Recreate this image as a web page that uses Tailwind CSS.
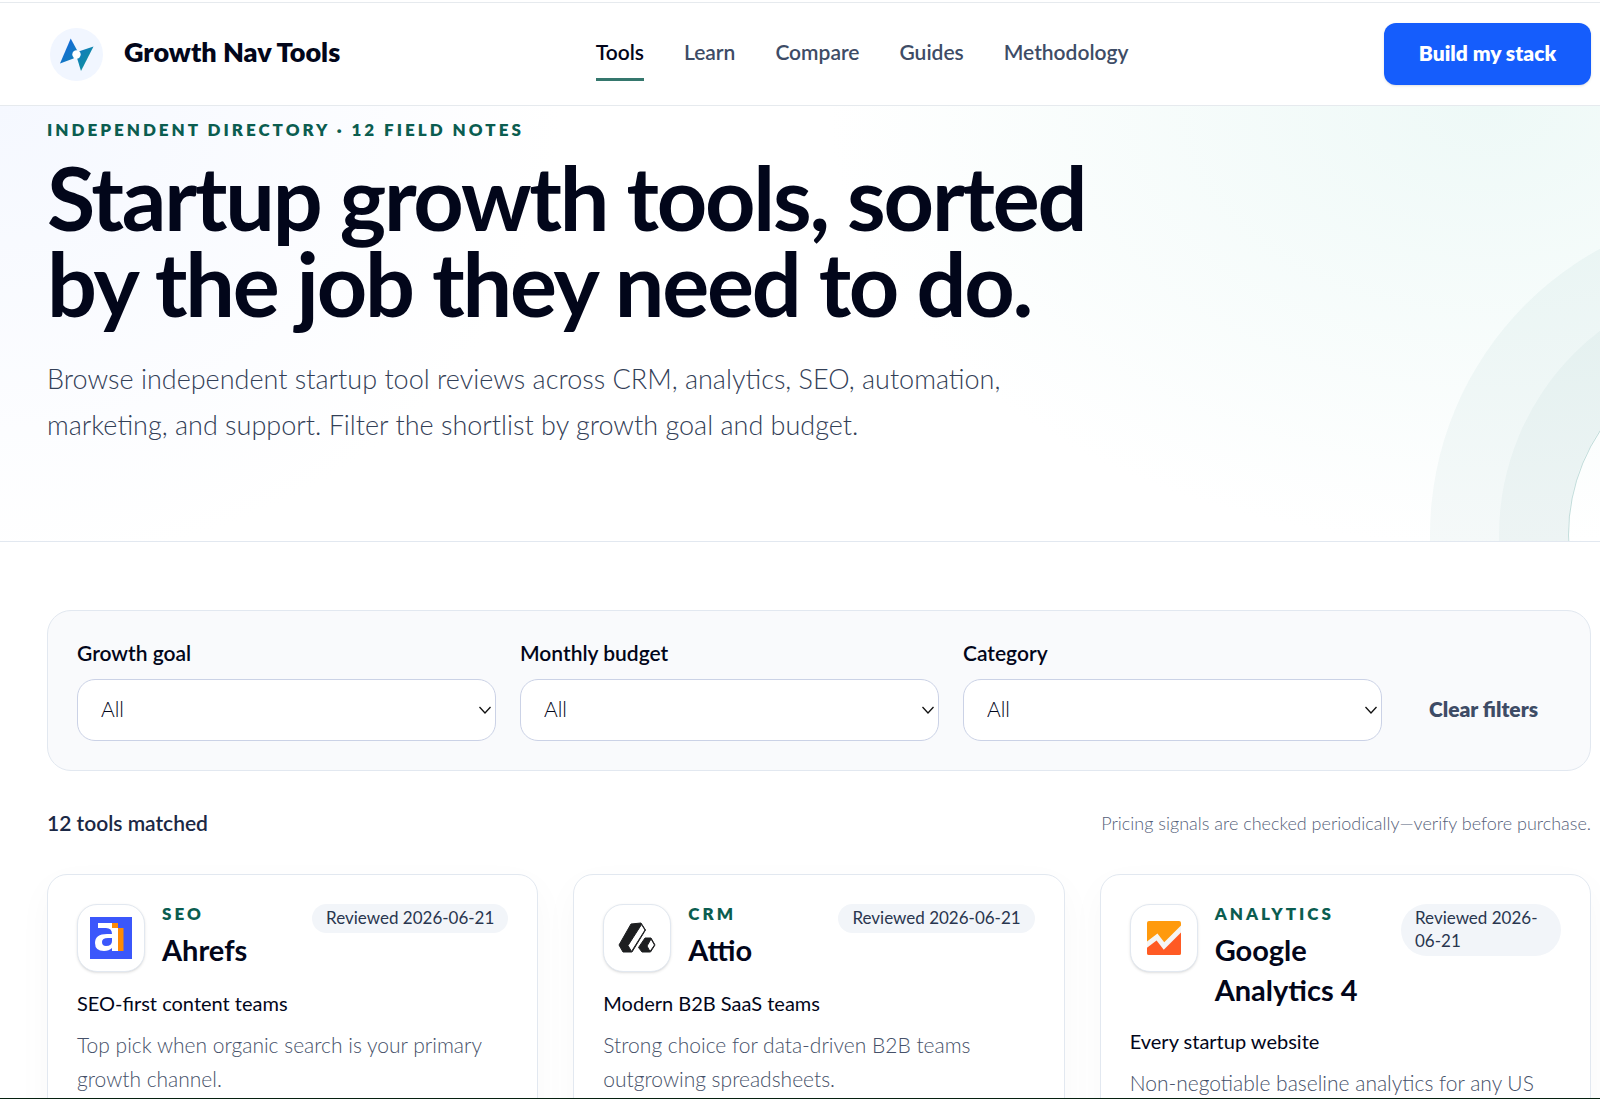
<!DOCTYPE html>
<html lang="en">
<head>
<meta charset="utf-8">
<meta name="viewport" content="width=device-width, initial-scale=1">
<title>Growth Nav Tools</title>
<script src="https://cdn.jsdelivr.net/npm/@tailwindcss/browser@4"></script>
</head>
<body class="h-screen overflow-hidden bg-white pt-[2px] font-[Lato,'Open_Sans',sans-serif] text-[#02061a]">

<header class="flex h-[104px] items-center justify-between border-y border-[#e6eaee] pr-[9px] pl-[47px]">
  <a href="#" class="flex items-center gap-[21px]">
    <svg class="ml-[3px] size-[53px]" viewBox="0 0 53 53" aria-hidden="true">
      <defs>
        <linearGradient id="needle" x1="10" y1="14" x2="42" y2="40" gradientUnits="userSpaceOnUse">
          <stop offset="0" stop-color="#1565e0"/><stop offset="1" stop-color="#0d9499"/>
        </linearGradient>
      </defs>
      <circle cx="26.500" cy="26.500" r="26.500" fill="#f1f6ff"/>
      <path d="M20.700 10.500 10 35.500 23.500 30.500 28 24Z" fill="url(#needle)"/>
      <path d="M43.500 18.500 28.500 23.500 27 30 31 43Z" fill="url(#needle)"/>
      <circle cx="26.500" cy="26.500" r="4.200" fill="#fff"/>
    </svg>
    <span class="pb-1 text-[27px] leading-8 font-extrabold">Growth Nav Tools</span>
  </a>
  <nav class="flex items-center gap-10 text-[21px] leading-7 font-semibold text-[#3e4c66]">
    <a href="#" class="border-b-3 border-[#35776d] pt-2.5 pb-3 text-[#02061a]">Tools</a>
    <a href="#" class="border-b-3 border-transparent pt-2.5 pb-3">Learn</a>
    <a href="#" class="border-b-3 border-transparent pt-2.5 pb-3">Compare</a>
    <a href="#" class="border-b-3 border-transparent pt-2.5 pb-3">Guides</a>
    <a href="#" class="border-b-3 border-transparent pt-2.5 pb-3">Methodology</a>
  </nav>
  <button type="button" class="h-[62px] w-[207px] rounded-xl bg-[#155dfc] pb-0.5 text-[21px] font-extrabold text-white shadow-sm">Build my stack</button>
</header>

<main>
  <section class="relative h-[436px] overflow-hidden border-b border-[#e2e8f0] bg-[radial-gradient(ellipse_660px_440px_at_93%_0%,#eef9f7,transparent),radial-gradient(ellipse_560px_460px_at_0%_0%,#f5f8ff,transparent)] pt-3 pr-[9px] pl-[47px]">
    <div class="absolute top-[241px] -right-[344px] size-[376px] rounded-full border border-[#0f766e]/25 shadow-[0_0_0_69px_rgba(15,118,110,0.035),0_0_0_138px_rgba(15,118,110,0.045)]"></div>
    <p class="text-[17px] leading-6 font-extrabold tracking-[3px] text-[#0b5d50]">INDEPENDENT DIRECTORY · 12 FIELD NOTES</p>
    <h1 class="mt-3 max-w-[1100px] text-[88px] leading-[86px] font-bold tracking-tight">Startup growth tools, sorted<br>by the job they need to do.</h1>
    <p class="mt-[30px] max-w-[1000px] text-[27px] leading-[46px] font-light text-[#334057]">Browse independent startup tool reviews across CRM, analytics, SEO, automation, marketing, and support. Filter the shortlist by growth goal and budget.</p>
  </section>

  <div class="pt-[68px] pr-[9px] pl-[47px]">
    <form class="grid grid-cols-[1fr_1fr_1fr_auto] items-end gap-6 rounded-3xl border border-[#e2e8f0] bg-[#f9fafc] p-[29px]">
      <div class="grid gap-[14px]">
        <label for="goal" class="text-[21px] leading-[25px] font-semibold">Growth goal</label>
        <div class="relative">
          <select id="goal" class="h-[62px] w-full appearance-none rounded-[18px] border border-[#cbd2e6] bg-white px-[23px] pb-0.5 text-[21px] font-light"><option>All</option></select>
          <svg class="pointer-events-none absolute top-[27px] right-[5px] h-2 w-3" viewBox="0 0 12 8" fill="none" stroke="#111" stroke-width="1.300"><path d="m.5 1 5.500 6 5.500-6"/></svg>
        </div>
      </div>
      <div class="grid gap-[14px]">
        <label for="budget" class="text-[21px] leading-[25px] font-semibold">Monthly budget</label>
        <div class="relative">
          <select id="budget" class="h-[62px] w-full appearance-none rounded-[18px] border border-[#cbd2e6] bg-white px-[23px] pb-0.5 text-[21px] font-light"><option>All</option></select>
          <svg class="pointer-events-none absolute top-[27px] right-[5px] h-2 w-3" viewBox="0 0 12 8" fill="none" stroke="#111" stroke-width="1.300"><path d="m.5 1 5.500 6 5.500-6"/></svg>
        </div>
      </div>
      <div class="grid gap-[14px]">
        <label for="category" class="text-[21px] leading-[25px] font-semibold">Category</label>
        <div class="relative">
          <select id="category" class="h-[62px] w-full appearance-none rounded-[18px] border border-[#cbd2e6] bg-white px-[23px] pb-0.5 text-[21px] font-light"><option>All</option></select>
          <svg class="pointer-events-none absolute top-[27px] right-[5px] h-2 w-3" viewBox="0 0 12 8" fill="none" stroke="#111" stroke-width="1.300"><path d="m.5 1 5.500 6 5.500-6"/></svg>
        </div>
      </div>
      <button type="button" class="h-[62px] w-[155px] pb-0.5 text-[21px] font-extrabold text-[#3e4c66]">Clear filters</button>
    </form>

    <div class="mt-9 flex h-8 items-center justify-between">
      <p class="text-[21px] font-semibold text-[#1b2845]">12 tools matched</p>
      <p class="text-lg font-light text-[#56617a]">Pricing signals are checked periodically—verify before purchase.</p>
    </div>

    <div class="mt-[35px] grid grid-cols-3 items-stretch gap-[35px]">
      <article class="h-[400px] rounded-[20px] border border-[#e2e8f0] bg-white p-[29px] shadow-[0_12px_36px_rgba(15,23,42,0.03)]">
        <div class="flex items-start">
          <div class="grid size-[68px] shrink-0 place-items-center rounded-[20px] border border-[#e2e8f0] bg-white shadow-sm">
            <svg class="size-[42px]" viewBox="0 0 42 42" aria-hidden="true">
              <path fill="#3b57fb" d="M0 0h42v42H0z"/>
              <path fill="#ff8b05" d="M22 6h6v5h5.500v23H28V12h-6z"/>
              <path fill="#fff" fill-rule="evenodd" d="M8 6h14v5h6v23h-6v-3q-3 3-8 3-9 0-9-8 0-9 12-9h5q0-6-6-6H8zM22 21h-4q-6 0-6 4 0 4 4 4 6 0 6-5z"/>
            </svg>
          </div>
          <div class="mr-4 ml-[17px] grow">
            <p class="text-[17px] leading-5 font-extrabold tracking-[3px] text-[#0b5d50]">SEO</p>
            <h2 class="mt-1.5 text-[29px] leading-10 font-bold">Ahrefs</h2>
          </div>
          <span class="rounded-[28px] bg-[#f2f5f9] px-3.5 pt-0.5 pb-1 text-[17px] leading-[23px] text-[#29364f]">Reviewed 2026-06-21</span>
        </div>
        <p class="mt-3.5 text-xl leading-[34px]">SEO-first content teams</p>
        <p class="mt-2 text-[21px] leading-[34px] font-light text-[#465169]">Top pick when organic search is your primary growth channel.</p>
      </article>

      <article class="h-[400px] rounded-[20px] border border-[#e2e8f0] bg-white p-[29px] shadow-[0_12px_36px_rgba(15,23,42,0.03)]">
        <div class="flex items-start">
          <div class="grid size-[68px] shrink-0 place-items-center rounded-[20px] border border-[#e2e8f0] bg-white shadow-sm">
            <svg class="h-8 w-[38px]" viewBox="0 0 38 32" fill="#1d1e20" stroke="#1d1e20" stroke-linejoin="round" aria-hidden="true">
              <path d="M13 2 23 1l4.500 7L14 30H5L1 23Z"/>
              <path fill="#fff" d="m23.500 2.500 3.500 5.500L13.500 29.500 10 23.500Z"/>
              <path d="M27 16h6l4 7-4.500 7H24l-3.500-4.500Z"/>
              <path fill="#fff" d="m33 17 3.500 6-4.500 6.500-3-5.500Z"/>
            </svg>
          </div>
          <div class="mr-4 ml-[17px] grow">
            <p class="text-[17px] leading-5 font-extrabold tracking-[3px] text-[#0b5d50]">CRM</p>
            <h2 class="mt-1.5 text-[29px] leading-10 font-bold">Attio</h2>
          </div>
          <span class="rounded-[28px] bg-[#f2f5f9] px-3.5 pt-0.5 pb-1 text-[17px] leading-[23px] text-[#29364f]">Reviewed 2026-06-21</span>
        </div>
        <p class="mt-3.5 text-xl leading-[34px]">Modern B2B SaaS teams</p>
        <p class="mt-2 text-[21px] leading-[34px] font-light text-[#465169]">Strong choice for data-driven B2B teams outgrowing spreadsheets.</p>
      </article>

      <article class="h-[400px] rounded-[20px] border border-[#e2e8f0] bg-white p-[29px] shadow-[0_12px_36px_rgba(15,23,42,0.03)]">
        <div class="flex items-start">
          <div class="grid size-[68px] shrink-0 place-items-center rounded-[20px] border border-[#e2e8f0] bg-white shadow-sm">
            <svg class="size-[34px]" viewBox="0 0 34 34" aria-hidden="true">
              <clipPath id="tile"><rect width="34" height="34" rx="2"/></clipPath>
              <g clip-path="url(#tile)">
                <path fill="#ff9a0d" d="M0 0h34v34H0z"/>
                <path fill="#ff5a24" d="m0 25 11-8 6 9L34 9v25H0z"/>
                <path fill="none" stroke="#f5f5f5" stroke-width="5" d="m-2 25 12-9 7 9L36 6"/>
              </g>
            </svg>
          </div>
          <div class="mr-4 ml-[17px] grow">
            <p class="text-[17px] leading-5 font-extrabold tracking-[3px] text-[#0b5d50]">ANALYTICS</p>
            <h2 class="mt-1.5 text-[29px] leading-10 font-bold">Google Analytics 4</h2>
          </div>
          <span class="w-[160px] shrink-0 rounded-[28px] bg-[#f2f5f9] px-3.5 pt-0.5 pb-1 text-[17px] leading-[23px] text-[#29364f]">Reviewed 2026-06-21</span>
        </div>
        <p class="mt-3.5 text-xl leading-[34px]">Every startup website</p>
        <p class="mt-2 text-[21px] leading-[34px] font-light text-[#465169]">Non-negotiable baseline analytics for any US startup.</p>
      </article>
    </div>
  </div>
</main>
<div class="fixed inset-x-0 bottom-0 h-px bg-[#06200f]"></div>
</body>
</html>
